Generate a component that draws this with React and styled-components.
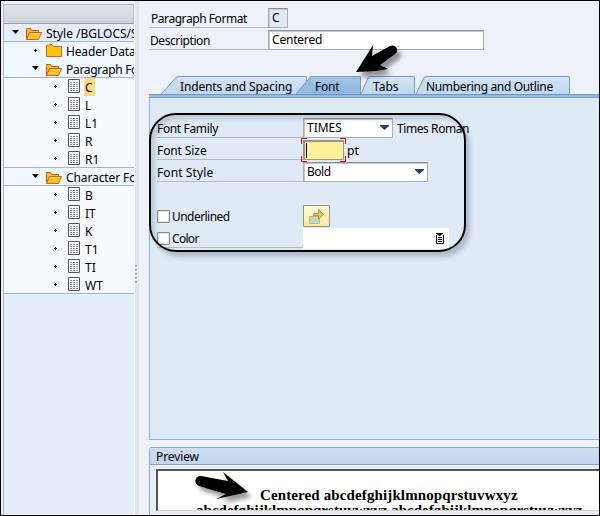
import React from "react";
import styled, { createGlobalStyle, css } from "styled-components";

const Global = createGlobalStyle`
  * { box-sizing: border-box; }
  body { margin: 0; overflow: hidden; font-family: "Noto Sans", sans-serif; font-size: 12px; color: #000; }
`;

const Window = styled.div`
  position: relative;
  width: 600px;
  height: 516px;
  display: flex;
  border: 1px solid #000;
  background: #eef2f8;
  overflow: hidden;
`;

const Text = styled.span`
  display: inline-block;
  white-space: nowrap;
  font-size: 12px;
  line-height: 18px;
  letter-spacing: ${(p) => p.$track || 0}px;
`;

/* Navigation tree */
const Sidebar = styled.aside`
  width: 131px;
  margin: 3px 0 0 2px;
  border-left: 1px solid #b0b4bf;
  background: #e6edfd;
  overflow: hidden;
  flex: none;
`;

const TreeHeader = styled.div`
  height: 20px;
  background: linear-gradient(#e0e4ea, #ced3db);
  border: 1px solid #a8b5ca;
  border-left: 0;
  border-bottom: 1px solid #8f9fb8;
`;

const levels = {
  root: css`padding-left: 8px; background: #e6edfd;`,
  node: css`padding-left: 28px; background: #eff7ff;`,
  leaf: css`padding-left: 48px; background: #f7faff;`,
};

const TreeRow = styled.div`
  display: flex;
  align-items: flex-start;
  height: 18px;
  white-space: nowrap;
  ${(p) => levels[p.$level]}
  box-shadow: ${(p) => (p.$line ? "inset 0 -1px 0 #9eb5cf" : "none")};
`;

const Marker = styled.span`
  width: ${(p) => (p.$leaf ? 16 : 13)}px;
  height: 18px;
  flex: none;
  display: flex;
  svg { display: block; }
`;

const IconSlot = styled.span`
  width: ${(p) => (p.$leaf ? 16 : 20)}px;
  height: 18px;
  flex: none;
  svg { display: block; }
`;

const TreeLabel = styled(Text)`
  height: 18px;
  padding: 1px 2px 0 1px;
  background: ${(p) => (p.$selected ? "#ffdc82" : "transparent")};
`;

const Splitter = styled.div`
  width: 5px;
  flex: none;
  background: #dde6ef;
  border-left: 1px solid #fff;
  display: flex;
  align-items: flex-start;
  padding-top: 263px;
`;

/* Main column */
const Main = styled.main`
  flex: 1;
  min-width: 0;
  padding: 7px 0 0 10px;
  display: flex;
  flex-direction: column;
`;

const Field = styled.div`
  display: flex;
  height: 20px;
  margin-bottom: 2px;
`;

const FieldLabel = styled.label`
  width: ${(p) => p.$width}px;
  height: 20px;
  padding: 2px 0 0 ${(p) => p.$indent ?? 0}px;
  display: flex;
  border-bottom: ${(p) => (p.$plain ? "0" : "1px solid #b6bbc1")};
`;

const Entry = styled.div`
  width: ${(p) => p.$width}px;
  height: 20px;
  padding: 0 3px 0 3px;
  display: flex;
  justify-content: space-between;
  align-items: flex-start;
  background: ${(p) => p.$fill || "#fff"};
  border: 1px solid #a9adb2;
  border-top: 1px solid #8d9196;
  box-shadow: inset 1px 1px 0 #c5c8cc;
`;

const TabStrip = styled.nav`
  display: flex;
  height: 18px;
  margin-top: 24px;
  padding-left: 12px;
  svg { display: block; flex: none; }
`;

const Tab = styled.div`
  display: flex;
  width: ${(p) => p.$width}px;
  margin-left: ${(p) => p.$shift || 0}px;
  position: relative;
  z-index: ${(p) => (p.$active ? 1 : 0)};
`;

const TabFace = styled.div`
  flex: 1;
  height: 18px;
  padding: 1px 0 0 ${(p) => p.$pad}px;
  border-top: 1px solid #749dca;
  border-right: 1px solid #749dca;
  border-radius: 0 2px 0 0;
  background: ${(p) => (p.$active ? "linear-gradient(#a5c5e7,#8db4df)" : "linear-gradient(#d3e4f4,#bfd6ef)")};
`;

const Panel = styled.section`
  height: 347px;
  padding: 23px 0 0 7px;
  background: #deeaf6;
  border-top: 1px solid #7199c5;
  border-left: 1px solid #8db0dd;
  border-bottom: 1px solid #8db0dd;
  box-shadow: inset 0 2px 0 #94b8e2, inset 0 3px 0 #7ca2cd;
`;

const SizeEntry = styled.div`
  position: relative;
  width: 41px;
  height: 20px;
  border: 1px solid #9b9980;
  border-width: 2px 1px 1px 2px;
  background: #fff099;
  padding: 1px;
`;

const Caret = styled.div`
  width: 1px;
  height: 15px;
  background: #000060;
`;

const FocusMarks = styled.svg`
  position: absolute;
  left: -4px;
  top: -4px;
`;

const Check = styled.span`
  width: 13px;
  height: 13px;
  margin: 2px 2px 0 0;
  border: 1px solid #85898f;
  border-radius: 1px;
  background: #fff;
  box-shadow: inset 0 0 0 1px #e5e7ea;
`;

const CommandButton = styled.button`
  width: 27px;
  height: 22px;
  margin-top: -1px;
  padding: 0;
  border: 1px solid #929183;
  border-radius: 1px;
  background: linear-gradient(#fff9d5, #f9e9a0);
  svg { display: block; }
`;

const ColorEntry = styled.div`
  width: 146px;
  height: 21px;
  background: #fff;
  display: flex;
  justify-content: flex-end;
  padding: 5px 4px 0 0;
`;

const PreviewGroup = styled.section`
  margin-top: 7px;
  height: 68px;
  border: 1px solid #88aad5;
  border-right: 0;
  border-radius: 3px 0 0 0;
  border-bottom: 0;
  background: #e7eef6;
`;

const PreviewTitle = styled.header`
  height: 17px;
  padding-left: 6px;
  border-bottom: 1px solid #809fcb;
  background: linear-gradient(#cce0f2, #c3d5ef);
`;

const PreviewPage = styled.div`
  margin: 4px 0 0 6px;
  height: 42px;
  border-top: 2px solid #555;
  border-left: 2px solid #555;
  border-bottom: 1px solid #d2d0c8;
  background: #fff;
  overflow: hidden;
  padding-top: 15px;
  font: bold 15px/18px "Liberation Serif", serif;
`;

const Sample = styled.div`
  height: 15px;
  line-height: 18px;
  white-space: nowrap;
  padding-left: ${(p) => p.$indent}px;
  letter-spacing: ${(p) => p.$track}px;
`;

/* Callouts drawn over the form */
const Outline = styled.div`
  position: absolute;
  left: 148px;
  top: 112px;
  width: 317px;
  height: 139px;
  border: 2px solid #050505;
  border-radius: 27px;
  box-shadow: 4px 5px 4px rgba(60, 75, 90, 0.28), inset 4px 4px 4px rgba(60, 75, 90, 0.2);
  z-index: 3;
`;

const Pointer = styled.svg`
  position: absolute;
  left: ${(p) => p.$x}px;
  top: ${(p) => p.$y}px;
  z-index: 4;
  overflow: visible;
  filter: drop-shadow(4px 5px 2px rgba(0, 0, 0, 0.4));
`;

const OpenMark = () => (
  <svg width="12" height="18"><path d="M0 6h7L3.5 10z" /></svg>
);
const DotMark = () => (
  <svg width="12" height="18"><path d="M2 8h3v1H2zM3 7h1v3H3z" /></svg>
);
const OpenFolder = () => (
  <svg width="17" height="18">
    <path d="M1.5 15.5v-11h4l1 2h7v2" fill="#ffc414" stroke="#d9511c" />
    <path d="M1.5 15.5l3-7h12l-3 7z" fill="#ffc51b" stroke="#d65b22" />
    <path d="M5 9.5h10" stroke="#ffe27a" />
  </svg>
);
const ClosedFolder = () => (
  <svg width="17" height="18">
    <path d="M1.5 3.5l5-1 2 2h8v10h-15z" fill="#ffc20e" stroke="#d46125" />
  </svg>
);
const PageIcon = () => (
  <svg width="13" height="18">
    <path d="M.5 1.5h11v13H.5z" fill="#fff" stroke="#55555c" />
    <path d="M2 4.5h8M2 6.5h8M2 8.5h8M2 10.5h8M2 12.5h8" stroke="#8a8a90" strokeDasharray="2 1" shapeRendering="crispEdges" />
  </svg>
);
const SelectArrow = () => (
  <svg width="9" height="18"><path d="M0 6h9v1L4.5 11 0 7z" fill="#263f78" /></svg>
);
const HelpList = () => (
  <svg width="10" height="12">
    <path d="M1.5 2v8.5h7V2" fill="#fff" stroke="#000" />
    <path d="M1 0h7v1H7L5 3H4L2 1H1zM3 4h4v1H3zM3 6h4v1H3zM3 8h4v1H3z" />
  </svg>
);

const TabSlope = ({ width, active }) => (
  <svg width={width} height="18">
    <path d={`M0 18L${width - 2} 1L${width} 0V18z`} fill={active ? "#99bce3" : "#c8dcf1"} />
    <path d={`M0 18L${width - 2} 1.5Q${width - 1} .5 ${width} .5`} fill="none" stroke="#749dca" />
  </svg>
);

const rows = [
  ["root", "Style /BGLOCS/S", 0, true, "open"],
  ["node", "Header Data", -0.15, false, "closed"],
  ["node", "Paragraph Fo", -0.3, true, "open"],
  ["leaf", "C"], ["leaf", "L"], ["leaf", "L1"], ["leaf", "R"], ["leaf", "R1", 0, true],
  ["node", "Character Fo", -0.1, true, "open"],
  ["leaf", "B"], ["leaf", "IT"], ["leaf", "K"], ["leaf", "T1"], ["leaf", "TI"], ["leaf", "WT", 0, true],
];

const tabs = [
  { label: "Indents and Spacing", track: -0.16, width: 146, slope: 17, pad: 2 },
  { label: "Font", track: -0.2, width: 65, slope: 16, pad: 3, shift: -11, active: true },
  { label: "Tabs", track: 0, width: 54, slope: 9, pad: 3 },
  { label: "Numbering and Outline", track: -0.34, width: 154, slope: 10, pad: 0, shift: 1 },
];

export default function App() {
  return (
    <Window>
      <Global />
      <Sidebar>
        <TreeHeader />
        {rows.map(([level, label, track, line, icon]) => (
          <TreeRow key={label} $level={level} $line={line}>
            <Marker $leaf={level === "leaf"}>
              {icon === "open" ? <OpenMark /> : <DotMark />}
            </Marker>
            <IconSlot $leaf={level === "leaf"}>
              {icon === "open" ? <OpenFolder /> : icon === "closed" ? <ClosedFolder /> : <PageIcon />}
            </IconSlot>
            <TreeLabel $track={track} $selected={label === "C"}>{label}</TreeLabel>
          </TreeRow>
        ))}
      </Sidebar>
      <Splitter>
        <svg width="4" height="20">
          <path d="M1.5 2v18" stroke="#fff" strokeWidth="3" strokeDasharray="2 2" />
          <path d="M1 1v18" stroke="#9cacc1" strokeWidth="2" strokeDasharray="2 2" />
        </svg>
      </Splitter>
      <Main>
        <Field>
          <FieldLabel $width={119} $indent={2}><Text $track={-0.44}>Paragraph Format</Text></FieldLabel>
          <Entry $width={20} $fill="#deeaf6"><Text>C</Text></Entry>
        </Field>
        <Field>
          <FieldLabel $width={119} $indent={1}><Text $track={-0.42}>Description</Text></FieldLabel>
          <Entry $width={216}><Text $track={-0.2}>Centered</Text></Entry>
        </Field>
        <TabStrip>
          {tabs.map((t) => (
            <Tab key={t.label} $width={t.width} $shift={t.shift} $active={t.active}>
              <TabSlope width={t.slope} active={t.active} />
              <TabFace $pad={t.pad} $active={t.active}><Text $track={t.track}>{t.label}</Text></TabFace>
            </Tab>
          ))}
        </TabStrip>
        <Panel>
          <Field>
            <FieldLabel $width={146}><Text $track={-0.35}>Font Family</Text></FieldLabel>
            <Entry $width={90}><Text>TIMES</Text><SelectArrow /></Entry>
            <FieldLabel $width={80} $indent={4} $plain><Text $track={-0.42}>Times Roman</Text></FieldLabel>
          </Field>
          <Field>
            <FieldLabel $width={146}><Text $track={-0.1}>Font Size</Text></FieldLabel>
            <SizeEntry>
              <Caret />
              <FocusMarks width="45" height="24">
                <path d="M6 .5H.5V6M39 .5h5.5V6M.5 18v5.5H6M44.5 18v5.5H39" fill="none" stroke="#e40019" />
              </FocusMarks>
            </SizeEntry>
            <FieldLabel $width={30} $indent={3} $plain><Text>pt</Text></FieldLabel>
          </Field>
          <Field>
            <FieldLabel $width={146}><Text $track={0.1}>Font Style</Text></FieldLabel>
            <Entry $width={125}><Text $track={-0.5}>Bold</Text><SelectArrow /></Entry>
          </Field>
          <Field />
          <Field>
            <FieldLabel $width={146} $plain><Check /><Text $track={-0.55}>Underlined</Text></FieldLabel>
            <CommandButton>
              <svg width="25" height="20">
                <path d="M5.5 10.5h10v7h-10z" fill="#ccd0c9" stroke="#9acb77" />
                <path d="M9.5 7.5h5v-4l5 5-5 5v-4h-5z" fill="#e8c33e" stroke="#a59c70" />
              </svg>
            </CommandButton>
          </Field>
          <Field>
            <FieldLabel $width={146}><Check /><Text $track={-0.7}>Color</Text></FieldLabel>
            <ColorEntry><HelpList /></ColorEntry>
          </Field>
        </Panel>
        <PreviewGroup>
          <PreviewTitle><Text $track={-0.1}>Preview</Text></PreviewTitle>
          <PreviewPage>
            <Sample $indent={102} $track={0.12}>Centered abcdefghijklmnopqrstuvwxyz</Sample>
            <Sample $indent={38} $track={0.02}>abcdefghijklmnopqrstuvwxyz abcdefghijklmnopqrstuvwxyz</Sample>
          </PreviewPage>
        </PreviewGroup>
      </Main>
      <Outline />
      <Pointer $x={355} $y={43} width="42" height="29">
        <path d="M0 28L17 1 16 12 34 2C39-.5 44 6 39 10L24 21 32 25 20 27z" />
      </Pointer>
      <Pointer $x={194} $y={471} width="53" height="28">
        <path d="M6 4L33 9 28 0 53 20 21 27 31 22 4 14C-2 12 0 3 6 4z" />
      </Pointer>
    </Window>
  );
}
